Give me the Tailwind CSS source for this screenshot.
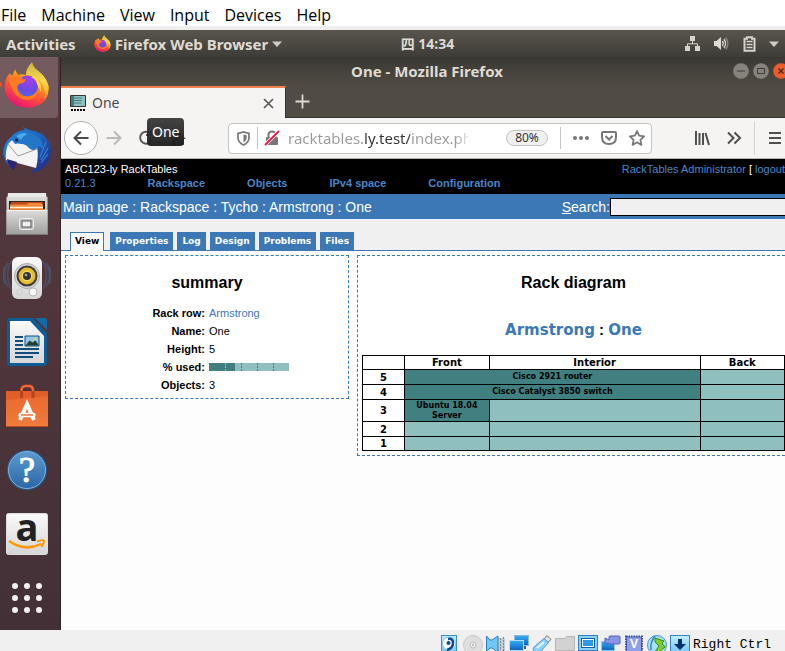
<!DOCTYPE html>
<html lang="en">
<head>
<meta charset="utf-8">
<meta name="viewport" content="width=device-width, initial-scale=1">
<title>One - Mozilla Firefox</title>
<script src="https://cdn.jsdelivr.net/npm/@tailwindcss/browser@4"></script>
</head>
<body class="flex h-screen flex-col overflow-hidden bg-[#f0f0f0] font-['Noto_Sans','Noto_Sans_CJK_SC',sans-serif]">

<!-- shared paints -->
<svg class="absolute size-0" aria-hidden="true">
  <defs>
    <linearGradient id="fxBody" x1=".8" y1="0" x2=".3" y2="1"><stop offset="0" stop-color="#ffe83a"/><stop offset=".4" stop-color="#ff9a1f"/><stop offset=".7" stop-color="#ff4a3c"/><stop offset="1" stop-color="#e8107a"/></linearGradient>
    <linearGradient id="fxTail" x1="0" y1="0" x2="0" y2="1"><stop offset="0" stop-color="#c9b544"/><stop offset=".5" stop-color="#f5d84a"/><stop offset="1" stop-color="#ffa51e"/></linearGradient>
    <radialGradient id="fxGlobe" cx=".6" cy=".2" r=".9"><stop offset="0" stop-color="#a63cf0"/><stop offset=".6" stop-color="#6a4be0"/><stop offset="1" stop-color="#4a6fe0"/></radialGradient>
    <linearGradient id="tbBlue" x1="0" y1="0" x2="1" y2="1"><stop offset="0" stop-color="#1f8fe0"/><stop offset=".5" stop-color="#1d62b8"/><stop offset="1" stop-color="#27207e"/></linearGradient>
    <linearGradient id="grey" x1="0" y1="0" x2="0" y2="1"><stop offset="0" stop-color="#dcdcda"/><stop offset="1" stop-color="#9d9d9b"/></linearGradient>
    <linearGradient id="white" x1="0" y1="0" x2="0" y2="1"><stop offset="0" stop-color="#fafafa"/><stop offset="1" stop-color="#d6d6d6"/></linearGradient>
    <linearGradient id="orange" x1="0" y1="0" x2="0" y2="1"><stop offset="0" stop-color="#e8672f"/><stop offset="1" stop-color="#f17b3c"/></linearGradient>
    <linearGradient id="help" x1="0" y1="0" x2="0" y2="1"><stop offset="0" stop-color="#5b9bd0"/><stop offset="1" stop-color="#2c66a4"/></linearGradient>
    <linearGradient id="sky" x1="0" y1="0" x2="0" y2="1"><stop offset="0" stop-color="#c4efff"/><stop offset="1" stop-color="#6cc0f5"/></linearGradient>
    <linearGradient id="deep" x1="0" y1="0" x2="0" y2="1"><stop offset="0" stop-color="#35b0f5"/><stop offset="1" stop-color="#0b5fc0"/></linearGradient>
    <symbol id="firefox" viewBox="0 0 46 46">
      <path d="M6 11 L8 14 L11 7.500 L14 13 Q18 11.500 22 13 Q22 7 28 .5 Q29 5 33 8 Q42 15 44.500 24 Q46 38 34 43.500 Q24 48 12 43.500 Q.5 37 .5 24 Q1 16 6 11Z" fill="url(#fxBody)"/>
      <path d="M28 .5 Q29 5 33 8 Q42 14 44.500 24 Q45 31 41 36 Q42 25 34 17 Q28 13 22 13 Q22 6 28 .5Z" fill="url(#fxTail)"/>
      <circle cx="23.500" cy="24" r="10.500" fill="url(#fxGlobe)"/>
      <path d="M5 14 Q8 17 13 14 Q16 16 22 17.500 Q21 21 15 22 Q12 24 14 29 Q17 34 23 34.500 Q30 34 34 28 Q34 36 25 38 Q14 38 9 29 Q5 22 5 14Z" fill="#ff7a22"/>
      <path d="M31 14 Q38 20 37 30 Q34 25 33 22 Q32 17 27 15Z" fill="#ffd53c"/>
    </symbol>
  </defs>
</svg>

<!-- virtual machine menu -->
<nav class="flex h-[30px] shrink-0 items-center gap-[15px] border-b-4 border-[#eeeeee] bg-white pt-[3px] pl-px text-[16px] leading-[22px] text-black font-['Open_Sans','Noto_Sans',sans-serif]" aria-label="Machine menu">
  <button>File</button><button>Machine</button><button>View</button><button>Input</button><button>Devices</button><button>Help</button>
</nav>

<!-- desktop top bar -->
<header class="grid h-[27px] shrink-0 grid-cols-[1fr_auto_1fr] items-center bg-linear-to-b from-[#5a564d] to-[#3e3c37] px-1.5 text-[15px] leading-5 font-bold text-[#dfdbd2]">
  <div class="flex items-center gap-[18px]">
    <button>Activities</button>
    <button class="flex items-center gap-1">
      <svg class="size-[17px]" aria-hidden="true"><use href="#firefox"/></svg>
      <span class="whitespace-nowrap">Firefox Web Browser</span>
      <svg class="h-[6px] w-[10px]" viewBox="0 0 10 6" aria-hidden="true"><path d="M0 .5h10L5 6z" fill="#d0ccc4"/></svg>
    </button>
  </div>
  <button class="pl-[70px] text-[14px]">四 14:34</button>
  <div class="flex items-center justify-end gap-3">
    <svg class="h-4 w-4" viewBox="0 0 16 16" fill="#d6d3cc" aria-label="Network"><path d="M5 0h5v5H5zM0 10h5v5H0zM10 10h5v5h-5z"/><path d="M7.500 5v3M2.500 10V7.800h10V10" fill="none" stroke="#d6d3cc"/></svg>
    <svg class="h-4 w-4" viewBox="0 0 16 16" fill="#dfdbd2" aria-label="Volume"><path d="M1 5h2.500L8 1v13L3.500 10H1z"/><path d="M9.500 5q1.500 2.500 0 5" fill="none" stroke="#dfdbd2" stroke-width="1.500"/><path d="M11 3q3 4.500 0 9" fill="none" stroke="#c9c5bd" stroke-width="1.500"/><path d="M12.800 1.500q4 6 0 12" fill="none" stroke="#85817a" stroke-width="1.500"/></svg>
    <svg class="h-4 w-4" viewBox="0 0 16 16" aria-label="Battery"><path d="M6 1.200h5v1.500h2.500v12h-10v-12H6z" fill="none" stroke="#d6d3cc" stroke-width="2"/><path d="M5.500 5.500h6M5.500 8.500h6M5.500 11.500h6" stroke="#d6d3cc" stroke-width="1.500"/></svg>
    <svg class="h-[6px] w-[10px]" viewBox="0 0 10 6" aria-hidden="true"><path d="M0 .5h10L5 6z" fill="#d0ccc4"/></svg>
  </div>
</header>

<div class="flex min-h-0 flex-1">
  <!-- dock -->
  <nav class="flex w-[61px] shrink-0 flex-col border-r border-[#2e2326] bg-linear-to-b from-[#553a3e] via-[#4e353b] to-[#433037]" aria-label="Dock">
    <button class="relative mr-[2px] flex h-[61px] items-center rounded-br bg-[#735b60] pb-1.5 pl-1" aria-label="Firefox">
      <span class="absolute -left-[3px] size-[5px] rounded-full bg-[#e95420]"></span>
      <svg class="size-[46px]" aria-hidden="true"><use href="#firefox"/></svg>
    </button>
    <button class="flex h-16 items-center pl-[3px]" aria-label="Thunderbird">
      <svg class="size-12" viewBox="0 0 48 48">
        <path d="M8 11 Q14 4 22 4 L20 1 L26 4 Q40 5 46 16 Q51 28 44 38 Q38 46 27 47 L35 39 L7 32 L8 42 Q2 37 0 27 Q0 17 8 11Z" fill="url(#tbBlue)"/>
        <path d="M5 18 L9 14 L14 17 L34 21 Q36 30 33 42 L3 34 Q2 26 5 18Z" fill="#f4f4f4"/>
        <path d="M5 18 L15 30 L34 23" fill="none" stroke="#9a9aa2"/>
        <path d="M9 14 Q17 4 27 7 Q40 10 40 23 Q36 18 33 23 Q29 26 24 20 Q20 16 12 18Z" fill="#2477c6"/>
        <path d="M13 10 Q20 5 24 8 Q20 10 18 14Z" fill="#4aa9e8"/>
        <circle cx="13.500" cy="14" r="1.600" fill="#102040"/>
        <path d="M43 16l-6 15M45 22l-7 12M45 28l-7 9" stroke="#2e86d8" stroke-width="1.200"/>
        <path d="M4 33 L14 36 L11 44 Q5 41 4 33Z" fill="#2d2478"/>
      </svg>
    </button>
    <button class="flex h-16 items-center pl-[5px]" aria-label="Files">
      <svg class="size-11" viewBox="0 0 44 44">
        <path d="M3 1h38l1 8H2z" fill="#e9e9e7"/><path d="M1.500 5h41v38h-41z" fill="url(#grey)"/><path d="M4 9h36v11H4z" fill="#2c2522"/>
        <path d="M6 10h32v3H6z" fill="#c1481d"/><path d="M5 12.500h17l1-1.500h13l2 2v4H5z" fill="#ef8a3c"/><path d="M5 15.500h33" stroke="#fff3dc" stroke-width="1.500"/><path d="M4 17h36v3H4z" fill="#e38339"/>
        <path d="M1.500 18h41v25h-41z" fill="url(#grey)"/><path d="M2 18.500h40" stroke="#f4f4f4"/><path d="M2 42.500h40" stroke="#777"/>
        <rect x="14.500" y="26.500" width="14" height="11" rx="2" fill="#bbb" stroke="#eee"/><rect x="17" y="29" width="9" height="6" fill="#eee" stroke="#5a5a5a"/>
      </svg>
    </button>
    <button class="flex h-16 items-center pl-[3px]" aria-label="Rhythmbox">
      <svg class="size-12" viewBox="0 0 48 48">
        <g fill="none" stroke="#4a5878" stroke-width="1.500" opacity=".7"><path d="M8 7q-7 14 0 28M5 9q-7 12 0 24M2 12q-4 9 0 18M40 7q7 14 0 28M43 9q7 12 0 24M46 12q4 9 0 18"/></g>
        <rect x="9" y="3" width="30" height="42" rx="6" fill="url(#white)"/>
        <circle cx="24" cy="22" r="12.500" fill="#d6d6d6" stroke="#aaa"/><circle cx="24" cy="22" r="10.500" fill="#3c3a36"/><circle cx="24" cy="22" r="8.500" fill="#e2bb2f"/><circle cx="24" cy="22" r="5.500" fill="#f0d65c"/><circle cx="24" cy="22" r="4" fill="#333"/><circle cx="23" cy="21" r="1.300" fill="#aaa"/>
        <circle cx="30" cy="38" r="4" fill="#f8f8f8" stroke="#bbb"/><rect x="14" y="35" width="5" height="6" rx="2" fill="none" stroke="#ccc"/>
      </svg>
    </button>
    <button class="flex h-16 items-center pl-[6px]" aria-label="LibreOffice Writer">
      <svg class="h-12 w-[42px]" viewBox="0 0 42 48">
        <path d="M4 0h23l14 15v30q0 3-3 3H4q-3 0-3-3V3q0-3 3-3z" fill="#0c5c95"/><path d="M29 0h9q3 0 3 3v9z" fill="#116ba8"/>
        <path d="M4 3h20l14 15v27H4z" fill="url(#white)"/>
        <path d="M9 19h8M9 23h8M9 27h8M9 31h24M9 35h24M9 39h18" stroke="#0d4e7f" stroke-width="2"/>
        <path d="M19 18h14v10H19z" fill="#94c9e8" stroke="#0d4e7f"/><path d="M19.500 27.500l4-5 3 2 3-2 3.500 5z" fill="#23402f"/><circle cx="29.500" cy="20.800" r="1.300" fill="#f6d34c"/>
      </svg>
    </button>
    <button class="flex h-16 items-center pl-[6px]" aria-label="Ubuntu Software">
      <svg class="h-11 w-[42px]" viewBox="0 0 42 44">
        <path d="M0 7h42v36H0z" fill="url(#orange)"/><path d="M0 7h42v5L0 16z" fill="#d9531f" opacity=".5"/>
        <path d="M15.500 14V6q0-4 4-4h3.500q4 0 4 4v8" fill="none" stroke="#b7451d" stroke-width="3"/><path d="M15.500 7q0-5 4-5h3.500q4 0 4 5" fill="none" stroke="#ee6c38" stroke-width="2"/>
        <path d="M14 36l7-16 7 16" fill="none" stroke="#fff" stroke-width="4"/><path d="M14.500 31h13" stroke="#fff" stroke-width="4.500" stroke-linecap="round"/><path d="M15 31h12" stroke="#ef7437" stroke-width="1.500"/>
        <path d="M0 42.500h42" stroke="#b84a20"/>
      </svg>
    </button>
    <button class="flex h-16 items-center pl-[6px]" aria-label="Help">
      <svg class="size-[42px] overflow-visible" viewBox="0 0 42 42"><circle cx="21" cy="21" r="20" fill="#285b91"/><circle cx="21" cy="21" r="18.500" fill="url(#help)" stroke="#7eb2dc"/><text x="21" y="33" text-anchor="middle" font-family="Liberation Serif" font-size="36" fill="#fff" stroke="#fff">?</text></svg>
    </button>
    <button class="flex h-16 items-center pl-[6px]" aria-label="Amazon">
      <svg class="size-[42px] overflow-visible" viewBox="0 0 42 42"><rect x=".5" y=".5" width="41" height="41" rx="2" fill="url(#white)" stroke="#ddd"/><text x="21" y="28" text-anchor="middle" font-family="Open Sans" font-weight="bold" font-size="38" fill="#222">a</text><path d="M3 28q16 11 32 3" fill="none" stroke="#f90" stroke-width="2.500"/><path d="M31 28.500q7-2.500 7-.5t-2.500 6" fill="none" stroke="#f90" stroke-width="2"/></svg>
    </button>
    <button class="flex h-16 items-center pl-[11px]" aria-label="Show Applications">
      <svg class="size-8" viewBox="0 0 32 32" fill="#f2f0f0"><circle cx="4" cy="4" r="3"/><circle cx="16" cy="4" r="3"/><circle cx="28" cy="4" r="3"/><circle cx="4" cy="16" r="3"/><circle cx="16" cy="16" r="3"/><circle cx="28" cy="16" r="3"/><circle cx="4" cy="28" r="3"/><circle cx="16" cy="28" r="3"/><circle cx="28" cy="28" r="3"/></svg>
    </button>
  </nav>

  <!-- browser window -->
  <div class="flex min-w-0 flex-1 flex-col bg-[#fdfdfd]">
    <div class="flex h-[29px] shrink-0 items-center justify-end overflow-hidden bg-linear-to-b from-[#3a3833] to-[#504c44] pb-px">
      <h1 class="flex-1 pl-[60px] text-center text-[15px] leading-5 font-bold text-[#dfdbd2]">One - Mozilla Firefox</h1>
      <div class="-mr-1 flex gap-1">
        <button aria-label="Minimize"><svg class="size-4" viewBox="0 0 16 16"><circle cx="8" cy="8" r="7.800" fill="#85837c"/><path d="M4 8h8" stroke="#3c3b37"/></svg></button>
        <button aria-label="Maximize"><svg class="size-4" viewBox="0 0 16 16"><circle cx="8" cy="8" r="7.800" fill="#85837c"/><path d="M4.500 5.500h7v5h-7z" fill="none" stroke="#3c3b37"/></svg></button>
        <button aria-label="Close"><svg class="size-4" viewBox="0 0 16 16"><circle cx="8" cy="8" r="7.800" fill="#ec5b29"/><path d="M5.500 5.500l5 5M10.500 5.500l-5 5" stroke="#3c2a22" stroke-width="1.200"/></svg></button>
      </div>
    </div>

    <div class="flex h-8 shrink-0 border-b border-[#35332e] bg-[#504c44]">
      <div class="-mb-px flex w-[225px] items-center border-t-2 border-r border-t-[#f08252] border-r-[#35332e] bg-[#f5f4f2] pr-2.5 pl-[9px]">
        <svg class="mr-1.5 h-4 w-4" viewBox="0 0 16 16" aria-hidden="true"><path d="M.5 .5h15v11H.5z" fill="#8fbfbf" stroke="#333"/><path d="M1 1h3v10H1z" fill="#408080"/><path d="M4 3h8M4 5.500h8M4 8h7" stroke="#408080"/><path d="M1 15h14" stroke="#000" stroke-width="2" stroke-dasharray="2 1"/></svg>
        <span class="flex-1 text-[14px] leading-5 text-[#4a4a4a]">One</span>
        <button aria-label="Close tab"><svg class="size-[13px]" viewBox="0 0 13 13"><path d="M2 2l9 9M11 2l-9 9" stroke="#555" stroke-width="1.600"/></svg></button>
      </div>
      <button class="pl-[9px]" aria-label="New tab"><svg class="size-[15px]" viewBox="0 0 15 15"><path d="M7.500 .5v14M.5 7.500h14" stroke="#dfdbd2" stroke-width="1.800"/></svg></button>
    </div>

    <div class="relative flex h-[41px] shrink-0 items-center border-b border-[#b6b4b0] bg-[#f5f4f2] pl-[3px]">
      <button class="flex size-[34px] items-center justify-center rounded-full border border-[#b1b0ac] bg-white" aria-label="Back"><svg class="size-4" viewBox="0 0 16 16" fill="none" stroke="#4a4a4a" stroke-width="2"><path d="M15.500 8H1.500M8 1.500L1.500 8 8 14.500"/></svg></button>
      <button class="ml-2" aria-label="Forward"><svg class="size-4" viewBox="0 0 16 16" fill="none" stroke="#bab9b6" stroke-width="2"><path d="M.5 8h14M8 1.500L14.500 8 8 14.500"/></svg></button>
      <button class="ml-4" aria-label="Reload"><svg class="size-4" viewBox="0 0 16 16" fill="none" stroke="#555" stroke-width="2"><path d="M12.500 3.500A6 6 0 1 0 14 9M13 0v5H8"/></svg></button>
      <button class="ml-4 w-4" aria-label="Home"><svg class="size-4" viewBox="0 0 16 16"><path d="M8 1L0 9h2v6h4v-4h4v4h4V9h2z" fill="#555"/></svg></button>
      <div class="absolute top-0 left-[86px] z-10 rounded bg-linear-to-b from-[#3a3a3a]/95 to-[#1c1c1c]/95 px-[5px] py-[4px] text-[14px] leading-5 text-white" role="tooltip">One</div>

      <div class="ml-[42px] flex h-[31px] w-[424px] items-center rounded border border-[#c4c2bf] bg-white pl-2 text-[#777]">
        <svg class="h-[15px] w-[13px]" viewBox="0 0 13 15" aria-label="Tracking protection"><path d="M6.500 1l5.500 1.500v4q0 5-5.500 7.500Q1 11.500 1 6.500v-4z" fill="none" stroke="#777" stroke-width="1.700"/><path d="M6.500 3.500v8q3.200-2 3.200-5.500V4.300z" fill="#777"/></svg>
        <span class="ml-[7px] h-[22px] w-px bg-[#c4c4c4]"></span>
        <svg class="ml-1.5 h-4 w-4" viewBox="0 0 16 16" aria-label="Connection not secure"><path d="M4.500 8V5q0-3.500 3.500-3.500T11.500 5v3" fill="none" stroke="#777" stroke-width="2"/><rect x="2" y="7" width="12" height="8" rx="1" fill="#777"/><path d="M1 15L15 1" stroke="#fff" stroke-width="3.500"/><path d="M1 15L15 1" stroke="#f0154f" stroke-width="2"/></svg>
        <input class="ml-2 w-[181px] min-w-0 bg-[linear-gradient(90deg,#9a9a9a_0_76px,#333_76px_122px,#9a9a9a_122px_167px,transparent_184px)] bg-clip-text text-[15px] leading-6 text-transparent outline-none" type="text" aria-label="Address" value="racktables.ly.test/index.php?page">
        <button class="ml-[37px] h-4 w-[42px] rounded-full border border-[#c4c2bf] bg-[#f0f0ef] text-[12px] leading-[14px] text-[#333]">80%</button>
        <span class="ml-[12px] h-[22px] w-px bg-[#c4c4c4]"></span>
        <button class="ml-3" aria-label="Page actions"><svg class="h-4 w-4" viewBox="0 0 16 16" fill="#777"><circle cx="2" cy="8" r="2"/><circle cx="8" cy="8" r="2"/><circle cx="14" cy="8" r="2"/></svg></button>
        <button class="ml-3" aria-label="Save to Pocket"><svg class="h-4 w-4" viewBox="0 0 16 16" fill="none" stroke="#777" stroke-width="2"><path d="M2 2h12q1 0 1 1v4q0 7-7 7T1 7V3q0-1 1-1z"/><path d="M4.500 6L8 9.500 11.500 6"/></svg></button>
        <button class="ml-3" aria-label="Bookmark"><svg class="h-4 w-4" viewBox="0 0 16 16" fill="none" stroke="#777" stroke-width="1.800" stroke-linejoin="round"><path d="M8 1l2.100 4.700 5 .6-3.700 3.500 1 5.100L8 12.300l-4.400 2.600 1-5.100L.9 6.300l5-.6z"/></svg></button>
      </div>
      <div class="ml-auto flex items-center pr-1">
        <button aria-label="Library"><svg class="size-4" viewBox="0 0 16 16" stroke="#4f4f4f" stroke-width="2"><path d="M2 1v14M5.500 3v12M9 3v12M11.500 3l3.500 12"/></svg></button>
        <button class="ml-4" aria-label="More tools"><svg class="size-4" viewBox="0 0 16 16" fill="none" stroke="#4f4f4f" stroke-width="2"><path d="M2 2.500L7.500 8 2 13.500M8.500 2.500L14 8l-5.500 5.500"/></svg></button>
        <span class="ml-3 h-[34px] w-px bg-[#d8d6d3]"></span>
        <button class="ml-3.5" aria-label="Menu"><svg class="h-4 w-3" viewBox="0 0 12 16" stroke="#4f4f4f" stroke-width="2"><path d="M0 3h12M0 8h12M0 13h12"/></svg></button>
      </div>
    </div>

    <!-- RackTables page -->
    <header class="flex h-[35px] shrink-0 justify-between bg-black pl-1 text-[11px] leading-[14px] text-[#4a86c8] font-['Liberation_Sans',Arial,sans-serif]">
      <div class="pt-[3px]">
        <div class="text-white">ABC123-ly RackTables</div>
        <nav class="flex gap-[42px] font-bold" aria-label="Sections">
          <a href="#" class="mr-[10px] font-normal">0.21.3</a><a href="#">Rackspace</a><a href="#">Objects</a><a href="#">IPv4 space</a><a href="#">Configuration</a>
        </nav>
      </div>
      <div class="pt-[3px] whitespace-nowrap"><a href="#">RackTables Administrator</a> <span class="text-white">[</span> <a href="#">logout</a></div>
    </header>

    <div class="flex h-[25px] shrink-0 items-center bg-[#3c78b5] pl-[2px] text-[14px] leading-5 text-white font-['Liberation_Sans',Arial,sans-serif]">
      <nav class="flex-1 whitespace-nowrap" aria-label="Breadcrumb"><a href="#">Main page</a> : <a href="#">Rackspace</a> : <a href="#">Tycho</a> : <a href="#">Armstrong</a> : <a href="#">One</a></nav>
      <label for="search"><u>S</u>earch:</label>
      <input id="search" type="search" class="h-[18px] w-[175px] appearance-none border border-r-0 border-black bg-[#f0f0f0] px-1 text-black outline-none">
    </div>

    <nav class="flex h-8 shrink-0 items-end gap-1 border-b border-[#3c78b5] bg-[#f0f0f0] pl-[9px] text-[9px] leading-[17px] font-bold text-white font-['DejaVu_Sans',sans-serif]" aria-label="Rack tabs">
      <a href="#" class="-mb-px border border-b-0 border-[#3c78b5] bg-white px-1 pb-px text-black">View</a>
      <a href="#" class="ml-0.5 border border-b-0 border-[#3c78b5] bg-[#3c78b5] px-1">Properties</a>
      <a href="#" class="border border-b-0 border-[#3c78b5] bg-[#3c78b5] px-1">Log</a>
      <a href="#" class="border border-b-0 border-[#3c78b5] bg-[#3c78b5] px-1">Design</a>
      <a href="#" class="border border-b-0 border-[#3c78b5] bg-[#3c78b5] px-1">Problems</a>
      <a href="#" class="border border-b-0 border-[#3c78b5] bg-[#3c78b5] px-1">Files</a>
    </nav>

    <main class="flex items-start gap-2 pt-1 pl-1 text-black">
      <section class="w-[284px] shrink-0 border border-dashed border-[#3c78b5] bg-white pb-1 font-['Liberation_Sans',Arial,sans-serif]">
        <h2 class="pt-[17px] pb-[11px] text-center text-[16px] leading-5 font-bold">summary</h2>
        <table class="w-full table-fixed text-[11px] leading-[18px]">
          <tbody>
            <tr><th class="pr-[2px] text-right" scope="row">Rack row:</th><td class="pl-[2px]"><a href="#" class="text-[#3c78b5]">Armstrong</a></td></tr>
            <tr><th class="pr-[2px] text-right" scope="row">Name:</th><td class="pl-[2px]">One</td></tr>
            <tr><th class="pr-[2px] text-right" scope="row">Height:</th><td class="pl-[2px]">5</td></tr>
            <tr><th class="pr-[2px] text-right" scope="row">% used:</th><td class="pl-[2px]"><svg class="h-2 w-20" viewBox="0 0 80 8" role="img" aria-label="33% used"><path d="M0 0h80v8H0z" fill="#8fbfbf"/><path d="M0 0h26v8H0z" fill="#408080"/><path d="M16.500 0v8" stroke="#8fbfbf" stroke-dasharray="2 1"/><path d="M32.500 0v8M48.500 0v8M64.500 0v8" stroke="#408080" stroke-dasharray="2 1"/></svg></td></tr>
            <tr><th class="pr-[2px] text-right" scope="row">Objects:</th><td class="pl-[2px]">3</td></tr>
          </tbody>
        </table>
      </section>

      <section class="min-w-0 flex-1 border border-r-0 border-dashed border-[#3c78b5] bg-white pb-1 pl-1">
        <h2 class="pt-[17px] text-center text-[16px] leading-5 font-bold font-['Liberation_Sans',Arial,sans-serif]">Rack diagram</h2>
        <h2 class="pt-[27px] pb-[15px] text-center text-[15px] leading-5 font-bold font-['Liberation_Sans',Arial,sans-serif]"><a href="#" class="text-[#3c78b5] font-['DejaVu_Sans',sans-serif]">Armstrong</a> : <a href="#" class="text-[#3c78b5] font-['DejaVu_Sans',sans-serif]">One</a></h2>
        <table class="w-full table-fixed border-collapse text-center text-[10px] leading-[13px] font-bold font-['DejaVu_Sans',sans-serif]">
          <colgroup><col class="w-[10%]"><col class="w-[20%]"><col class="w-1/2"><col class="w-[20%]"></colgroup>
          <thead>
            <tr class="h-[14px]"><td class="border border-black"></td><th class="border border-black" scope="col">Front</th><th class="border border-black" scope="col">Interior</th><th class="border border-black" scope="col">Back</th></tr>
          </thead>
          <tbody>
            <tr class="h-[15px]"><th class="border border-black" scope="row">5</th><td class="border border-black bg-[#408080] text-[8px] leading-[10px]" colspan="2">Cisco 2921 router</td><td class="border border-black bg-[#8fbfbf]"></td></tr>
            <tr class="h-[15px]"><th class="border border-black" scope="row">4</th><td class="border border-black bg-[#408080] text-[8px] leading-[10px]" colspan="2">Cisco Catalyst 3850 switch</td><td class="border border-black bg-[#8fbfbf]"></td></tr>
            <tr class="h-[22px]"><th class="border border-black" scope="row">3</th><td class="border border-black bg-[#408080] text-[8px] leading-[10px]">Ubuntu 18.04 Server</td><td class="border border-black bg-[#8fbfbf]"></td><td class="border border-black bg-[#8fbfbf]"></td></tr>
            <tr class="h-[15px]"><th class="border border-black" scope="row">2</th><td class="border border-black bg-[#8fbfbf]"></td><td class="border border-black bg-[#8fbfbf]"></td><td class="border border-black bg-[#8fbfbf]"></td></tr>
            <tr class="h-[14px]"><th class="border border-black" scope="row">1</th><td class="border border-black bg-[#8fbfbf]"></td><td class="border border-black bg-[#8fbfbf]"></td><td class="border border-black bg-[#8fbfbf]"></td></tr>
          </tbody>
        </table>
      </section>
    </main>
  </div>
</div>

<!-- virtual machine status bar -->
<footer class="flex h-[21px] shrink-0 items-end justify-end gap-[3px] bg-[#f0f0f0] pr-[14px]">
  <svg class="h-4 w-5" viewBox="0 0 20 16" aria-label="Hard disk"><rect x="1.500" y=".5" width="15" height="19" fill="url(#sky)" stroke="#3b8ed0"/><circle cx="9" cy="8.500" r="6.500" fill="#fff" stroke="#88c4ea"/><path d="M8 4q5-1 5 4t-6 7" fill="none" stroke="#0b4a94" stroke-width="2.500"/><circle cx="8.500" cy="8" r="2" fill="#0b4a94"/></svg>
  <svg class="h-4 w-5" viewBox="0 0 20 16" aria-label="Optical disc"><circle cx="10" cy="10" r="9.500" fill="#dedede" stroke="#c8c8c8"/><circle cx="10" cy="10" r="3" fill="#eee" stroke="#bbb"/><circle cx="10" cy="10" r="1" fill="#aaa"/></svg>
  <svg class="h-4 w-5" viewBox="0 0 20 16" aria-label="Audio"><path d="M12 3h7v14h-7z" fill="#c8ccce"/><path d="M14.500 3v13M17.500 2v14" stroke="#888" stroke-dasharray="2 1"/><path d="M.5 1L4 5h2l6-4v16l-6-4H4l-3.500 4z" fill="#70c8f4" stroke="#2b7cc0"/></svg>
  <svg class="h-4 w-5" viewBox="0 0 20 16" aria-label="Network"><rect x="5.500" y=".5" width="14" height="10" fill="url(#deep)" stroke="#8bb8d8"/><path d="M11 11h6v3h-6z" fill="#555"/><rect x=".5" y="5.500" width="14" height="10" fill="url(#deep)" stroke="#b8dcf4"/></svg>
  <svg class="h-4 w-5" viewBox="0 0 20 16" aria-label="USB"><path d="M12 4l3-3.500 4 4-3.500 3z" fill="#e4e4e4" stroke="#777"/><path d="M2 12L12 3.500l4.500 4L9 16q-4 3-7 0-2-2 0-4z" fill="#8fd2f7" stroke="#4a9bd6"/><path d="M5 13l7-6" stroke="#e2f6ff" stroke-width="2"/></svg>
  <svg class="h-4 w-5" viewBox="0 0 20 16" aria-label="Shared folders"><path d="M.5 3.500h9l2-2h8v14H.5z" fill="#d2d2d2" stroke="#b4b4b4"/></svg>
  <svg class="h-4 w-5" viewBox="0 0 20 16" aria-label="Display"><rect x=".5" y=".5" width="19" height="15" fill="#8dd0f6" stroke="#2f7fc4"/><rect x="3.500" y="3.500" width="13" height="9" fill="#fff" stroke="#0c5fb0"/><path d="M5 5h10v6H5z" fill="#2b98e8"/></svg>
  <svg class="h-4 w-5" viewBox="0 0 20 16" aria-label="Recording"><rect x=".5" y="6.500" width="13" height="9" fill="url(#deep)" stroke="#9ac6e8"/><path d="M4 3l4 2V2q0-1 1-1h9q1 0 1 1v6q0 1-1 1H9q-1 0-1-1L4 9z" fill="#8a94e4" stroke="#5560c0"/></svg>
  <svg class="h-4 w-5" viewBox="0 0 20 16" aria-label="Processor"><rect x="2" y="1.500" width="16" height="17" fill="#5468c4" stroke="#3b4ba0" stroke-width="2" stroke-dasharray="1.500 1"/><rect x="3" y="2.500" width="14" height="15" fill="#8fa0e6"/><text x="10" y="13" text-anchor="middle" font-family="Liberation Sans" font-weight="bold" font-size="12" fill="#fff">V</text></svg>
  <svg class="h-4 w-5" viewBox="0 0 20 16" aria-label="Mouse integration"><circle cx="10" cy="10" r="9.500" fill="#a8def8" stroke="#3f97d0"/><path d="M8 1q-5 6-4 14" fill="none" stroke="#2b8bc8" stroke-width="1.500"/><path d="M8 3l9 3-2 2 3 4-6 5H8l4-6-4-4z" fill="#7ad02a" stroke="#3d8c15"/></svg>
  <svg class="h-4 w-5" viewBox="0 0 20 16" aria-label="Keyboard capture"><rect x=".5" y=".5" width="19" height="19" fill="url(#sky)" stroke="#2f86c8"/><path d="M8 4h4v5h4l-6 6-6-6h4z" fill="#08306c"/></svg>
  <span class="text-[13px] leading-[13px] whitespace-nowrap text-black font-['Liberation_Mono',monospace]">Right Ctrl</span>
</footer>
</body>
</html>
